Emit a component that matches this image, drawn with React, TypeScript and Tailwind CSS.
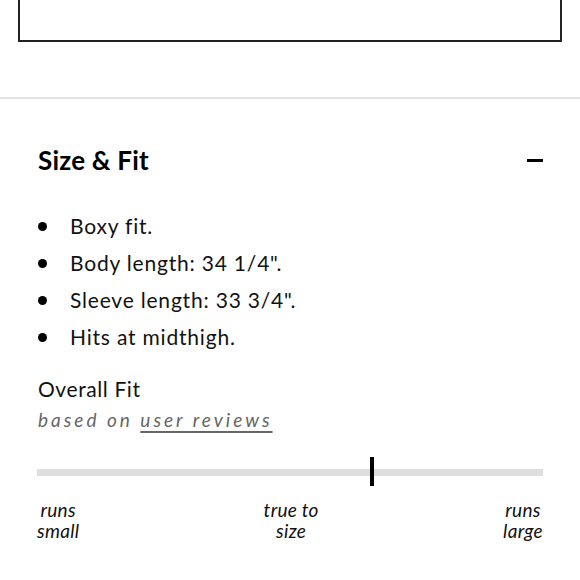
import React from "react";

const font = { fontFamily: "Lato, 'Open Sans', sans-serif" };

export default function App() {
  const bullets = [
    "Boxy fit.",
    "Body length: 34 1/4\".",
    "Sleeve length: 33 3/4\".",
    "Hits at midthigh.",
  ];
  return (
    <div className="w-[580px] h-[580px] bg-white overflow-hidden text-[#111]" style={font}>
      <div className="mx-[18px] h-[42px] border-l-2 border-r-2 border-b-2 border-[#222]" />
      <div className="mt-[55px] h-[2px] bg-[#e2e2e2]" />
      <div className="px-[37px]">
        <div className="mt-[46px] flex items-center justify-between">
          <h2 className="ml-[1px] text-[26px] leading-[30px] font-bold text-black tracking-[0.2px]">Size &amp; Fit</h2>
          <div className="w-[16px] h-[3px] bg-black" />
        </div>
        <ul className="mt-[38px] flex flex-col gap-[11px]">
          {bullets.map((b) => (
            <li key={b} className="flex items-center text-[21px] leading-[26px] tracking-[0.8px]">
              <span className="ml-[1px] w-[9px] h-[9px] rounded-full bg-black" />
              <span className="ml-[23px]">{b}</span>
            </li>
          ))}
        </ul>
        <div className="mt-[26px] text-[21px] leading-[26px] tracking-[0.6px] ml-[1px]">Overall Fit</div>
        <div className="mt-[6px] ml-[1px] text-[19px] leading-[24px] italic tracking-[3px] text-[#666]">
          based on <span className="underline underline-offset-[4px] decoration-[1.5px]">user reviews</span>
        </div>
        <div className="mt-[25px] relative h-[30px] flex items-center">
          <div className="w-full h-[7px] bg-[#dedede]" />
          <div className="absolute left-[333px] top-0 w-[4px] h-[29px] bg-black" />
        </div>
        <div className="mt-[12px] flex justify-between text-[19px] leading-[21px] italic tracking-[0.3px] text-[#111]">
          <div className="text-center">runs<br />small</div>
          <div className="text-center">true to<br />size</div>
          <div className="text-center">runs<br />large</div>
        </div>
      </div>
    </div>
  );
}
